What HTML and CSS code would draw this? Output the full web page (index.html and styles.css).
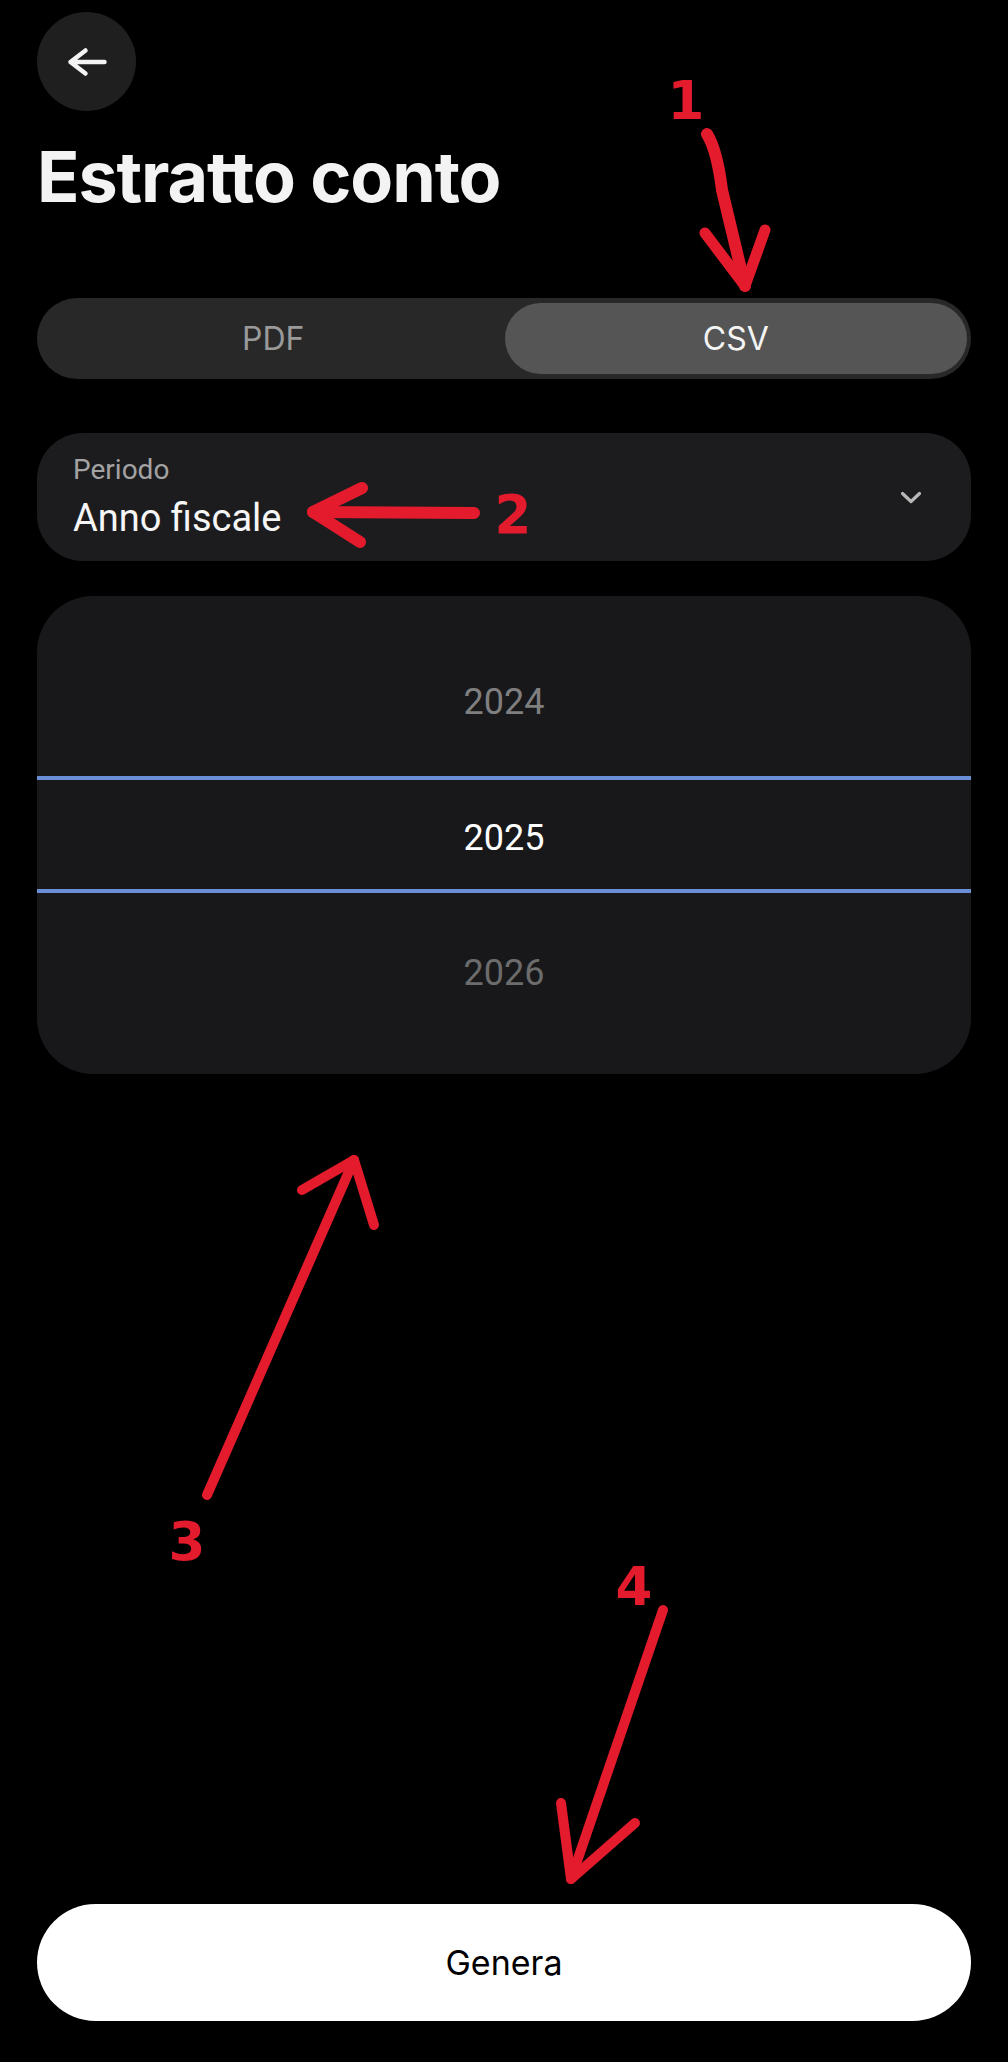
FILE: index.html
```html
<!DOCTYPE html>
<html lang="it">
<head>
<meta charset="utf-8">
<title>Estratto conto</title>
<link rel="stylesheet" href="styles.css">
</head>
<body>
<div class="page">
  <button class="back" aria-label="Indietro">
    <svg class="back-icon" width="40" height="32" viewBox="0 0 40 32">
      <path d="M37.5 16 H3.5 M18.5 4.5 L3.5 16 L18.5 27.5" fill="none" stroke="#f4f4f4" stroke-width="4.5" stroke-linecap="round" stroke-linejoin="round"/>
    </svg>
  </button>

  <h1 class="title">Estratto conto</h1>

  <div class="segment">
    <div class="seg-item">PDF</div>
    <div class="seg-item seg-active">CSV</div>
  </div>

  <div class="field">
    <div class="field-text">
      <div class="field-label">Periodo</div>
      <div class="field-value">Anno fiscale</div>
    </div>
    <svg class="chevron" width="22" height="13" viewBox="0 0 22 13">
      <path d="M2.5 2.5 L11 10.5 L19.5 2.5" fill="none" stroke="#b8b8b8" stroke-width="3.2" stroke-linecap="round" stroke-linejoin="round"/>
    </svg>
  </div>

  <div class="picker">
    <div class="pick-row pick-first">2024</div>
    <div class="pick-row pick-selected">2025</div>
    <div class="pick-row pick-last">2026</div>
  </div>

  <div class="spacer"></div>

  <button class="primary">Genera</button>
</div>

<svg class="annot" width="1008" height="2062" viewBox="0 0 1008 2062" aria-hidden="true">
  <g fill="none" stroke="#e31b2d" stroke-linecap="round" stroke-linejoin="round">
    <path d="M707 134 Q717 150 722 190 L745 286" stroke-width="12"/>
    <path d="M705 233 L745 286 L765 230" stroke-width="11"/>
    <path d="M474 513 L313 512" stroke-width="12"/>
    <path d="M362 488 L313 512 L360 542" stroke-width="12"/>
    <path d="M207 1495 L354 1160" stroke-width="10"/>
    <path d="M302 1190 L354 1160 L374 1225" stroke-width="10"/>
    <path d="M663 1610 L571 1879" stroke-width="10"/>
    <path d="M561 1803 L571 1879 L635 1823" stroke-width="10"/>
  </g>
  <g class="annot-num" fill="#e31b2d" text-anchor="middle">
    <text x="686" y="119">1</text>
    <text x="513" y="533">2</text>
    <text x="187" y="1560">3</text>
    <text x="634" y="1605">4</text>
  </g>
</svg>
</body>
</html>
```

FILE: styles.css
```css
html, body {
  margin: 0;
  padding: 0;
  background: #000;
}

body {
  position: relative;
  font-family: Roboto, "Noto Sans", sans-serif;
  color: #f2f2f2;
}

.page {
  min-height: 100vh;
  box-sizing: border-box;
  display: flex;
  flex-direction: column;
  padding: 12px 37px 41px 37px;
}

.back {
  width: 99px;
  height: 99px;
  border-radius: 50%;
  border: none;
  padding: 0;
  background: #1f1f1f;
  display: flex;
  align-items: center;
  justify-content: center;
  flex-shrink: 0;
}

.back-icon {
  display: block;
}

.title {
  margin: 24px 0 0 0;
  font-family: Inter, "Liberation Sans", sans-serif;
  font-weight: 700;
  font-size: 70px;
  line-height: 84px;
  letter-spacing: -1.1px;
  color: #f3f3f3;
}

.segment {
  margin-top: 79px;
  height: 81px;
  box-sizing: border-box;
  padding: 5px 4px 5px 5px;
  border-radius: 41px;
  background: #282828;
  display: grid;
  grid-template-columns: 1fr 1fr;
}

.seg-item {
  display: flex;
  align-items: center;
  justify-content: center;
  border-radius: 36px;
  font-family: Inter, "Liberation Sans", sans-serif;
  font-size: 32px;
  font-weight: 400;
  color: #9a9a9a;
}

.seg-active {
  background: #555555;
  color: #f4f4f4;
}

.field {
  margin-top: 54px;
  height: 128px;
  box-sizing: border-box;
  padding: 20px 49px 20px 36px;
  border-radius: 46px;
  background: #1c1c1e;
  display: flex;
  align-items: center;
  justify-content: space-between;
}

.field-text {
  display: flex;
  flex-direction: column;
  gap: 8px;
}

.field-label {
  font-size: 28px;
  line-height: 34px;
  color: #a3a3a3;
}

.field-value {
  font-size: 38px;
  line-height: 46px;
  color: #f6f6f6;
}

.chevron {
  display: block;
}

.picker {
  margin-top: 35px;
  box-sizing: border-box;
  height: 478px;
  padding: 32px 0 22px 0;
  border-radius: 56px;
  background: #18181b;
  display: flex;
  flex-direction: column;
}

.pick-row {
  display: flex;
  align-items: center;
  justify-content: center;
  font-size: 36px;
}

.pick-first {
  height: 148px;
  color: #7f7f7f;
}

.pick-selected {
  height: 117px;
  box-sizing: border-box;
  padding-top: 6px;
  border-top: 4px solid #6b8fd6;
  border-bottom: 4px solid #6b8fd6;
  color: #ffffff;
}

.pick-last {
  height: 159px;
  color: #6c6c6c;
}

.spacer {
  flex: 1;
}

.primary {
  height: 117px;
  width: 100%;
  border: none;
  border-radius: 59px;
  background: #ffffff;
  color: #000;
  font-family: Inter, "Liberation Sans", sans-serif;
  font-size: 34px;
  font-weight: 400;
  flex-shrink: 0;
}

.annot {
  position: absolute;
  top: 0;
  left: 0;
  pointer-events: none;
}

.annot-num {
  font-family: "DejaVu Sans", sans-serif;
  font-weight: 700;
  font-size: 53px;
}
```
